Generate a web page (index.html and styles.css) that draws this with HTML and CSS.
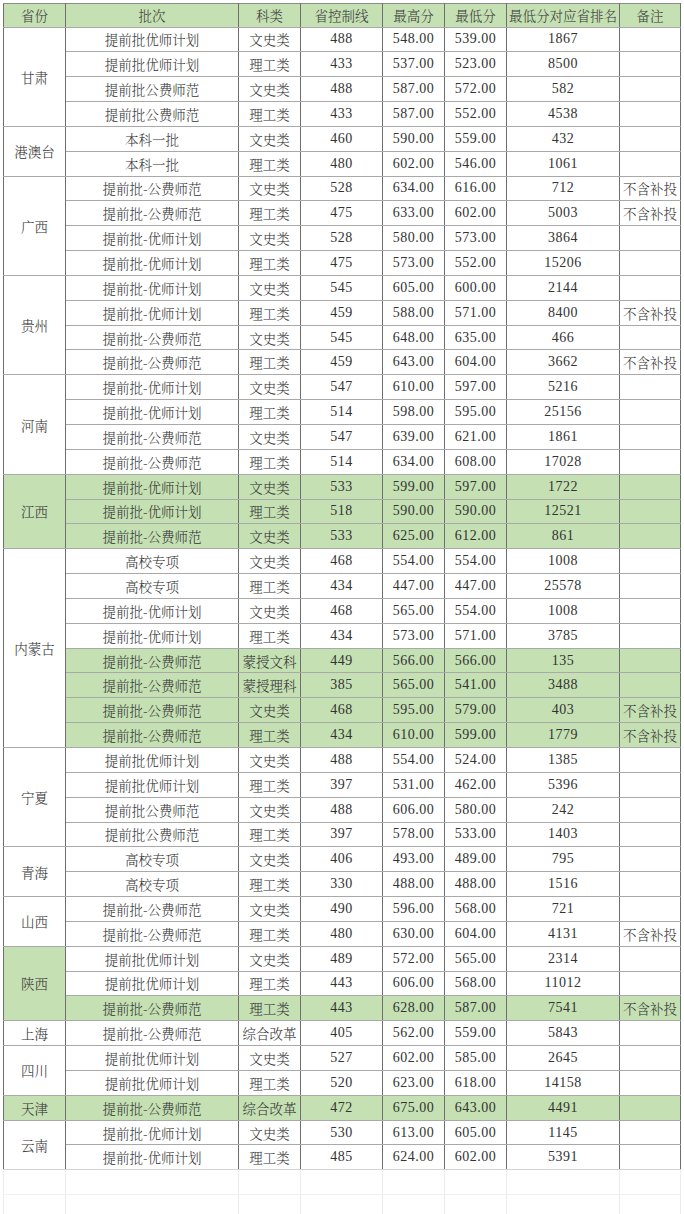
FILE: index.html
```html
<!DOCTYPE html>
<html lang="zh-CN">
<head>
<meta charset="utf-8">
<title>录取分数</title>
<link rel="stylesheet" href="styles.css">
</head>
<body>
<table class="score">
<colgroup>
<col class="c-prov"><col class="c-batch"><col class="c-type"><col class="c-line"><col class="c-max"><col class="c-min"><col class="c-rank"><col class="c-note">
</colgroup>
<thead>
<tr class="g"><th>省份</th><th>批次</th><th>科类</th><th>省控制线</th><th>最高分</th><th>最低分</th><th>最低分对应省排名</th><th>备注</th></tr>
</thead>
<tbody>
<tr><td rowspan="4" class="prov">甘肃</td><td>提前批优师计划</td><td>文史类</td><td class="n">488</td><td class="n">548.00</td><td class="n">539.00</td><td class="n">1867</td><td></td></tr>
<tr><td>提前批优师计划</td><td>理工类</td><td class="n">433</td><td class="n">537.00</td><td class="n">523.00</td><td class="n">8500</td><td></td></tr>
<tr><td>提前批公费师范</td><td>文史类</td><td class="n">488</td><td class="n">587.00</td><td class="n">572.00</td><td class="n">582</td><td></td></tr>
<tr><td>提前批公费师范</td><td>理工类</td><td class="n">433</td><td class="n">587.00</td><td class="n">552.00</td><td class="n">4538</td><td></td></tr>

<tr><td rowspan="2" class="prov">港澳台</td><td>本科一批</td><td>文史类</td><td class="n">460</td><td class="n">590.00</td><td class="n">559.00</td><td class="n">432</td><td></td></tr>
<tr><td>本科一批</td><td>理工类</td><td class="n">480</td><td class="n">602.00</td><td class="n">546.00</td><td class="n">1061</td><td></td></tr>

<tr><td rowspan="4" class="prov">广西</td><td>提前批-公费师范</td><td>文史类</td><td class="n">528</td><td class="n">634.00</td><td class="n">616.00</td><td class="n">712</td><td>不含补投</td></tr>
<tr><td>提前批-公费师范</td><td>理工类</td><td class="n">475</td><td class="n">633.00</td><td class="n">602.00</td><td class="n">5003</td><td>不含补投</td></tr>
<tr><td>提前批-优师计划</td><td>文史类</td><td class="n">528</td><td class="n">580.00</td><td class="n">573.00</td><td class="n">3864</td><td></td></tr>
<tr><td>提前批-优师计划</td><td>理工类</td><td class="n">475</td><td class="n">573.00</td><td class="n">552.00</td><td class="n">15206</td><td></td></tr>

<tr><td rowspan="4" class="prov">贵州</td><td>提前批-优师计划</td><td>文史类</td><td class="n">545</td><td class="n">605.00</td><td class="n">600.00</td><td class="n">2144</td><td></td></tr>
<tr><td>提前批-优师计划</td><td>理工类</td><td class="n">459</td><td class="n">588.00</td><td class="n">571.00</td><td class="n">8400</td><td>不含补投</td></tr>
<tr><td>提前批-公费师范</td><td>文史类</td><td class="n">545</td><td class="n">648.00</td><td class="n">635.00</td><td class="n">466</td><td></td></tr>
<tr><td>提前批-公费师范</td><td>理工类</td><td class="n">459</td><td class="n">643.00</td><td class="n">604.00</td><td class="n">3662</td><td>不含补投</td></tr>

<tr><td rowspan="4" class="prov">河南</td><td>提前批-优师计划</td><td>文史类</td><td class="n">547</td><td class="n">610.00</td><td class="n">597.00</td><td class="n">5216</td><td></td></tr>
<tr><td>提前批-优师计划</td><td>理工类</td><td class="n">514</td><td class="n">598.00</td><td class="n">595.00</td><td class="n">25156</td><td></td></tr>
<tr><td>提前批-公费师范</td><td>文史类</td><td class="n">547</td><td class="n">639.00</td><td class="n">621.00</td><td class="n">1861</td><td></td></tr>
<tr><td>提前批-公费师范</td><td>理工类</td><td class="n">514</td><td class="n">634.00</td><td class="n">608.00</td><td class="n">17028</td><td></td></tr>

<tr class="g"><td rowspan="3" class="prov">江西</td><td>提前批-优师计划</td><td>文史类</td><td class="n">533</td><td class="n">599.00</td><td class="n">597.00</td><td class="n">1722</td><td></td></tr>
<tr class="g"><td>提前批-优师计划</td><td>理工类</td><td class="n">518</td><td class="n">590.00</td><td class="n">590.00</td><td class="n">12521</td><td></td></tr>
<tr class="g"><td>提前批-公费师范</td><td>文史类</td><td class="n">533</td><td class="n">625.00</td><td class="n">612.00</td><td class="n">861</td><td></td></tr>

<tr><td rowspan="8" class="prov">内蒙古</td><td>高校专项</td><td>文史类</td><td class="n">468</td><td class="n">554.00</td><td class="n">554.00</td><td class="n">1008</td><td></td></tr>
<tr><td>高校专项</td><td>理工类</td><td class="n">434</td><td class="n">447.00</td><td class="n">447.00</td><td class="n">25578</td><td></td></tr>
<tr><td>提前批-优师计划</td><td>文史类</td><td class="n">468</td><td class="n">565.00</td><td class="n">554.00</td><td class="n">1008</td><td></td></tr>
<tr><td>提前批-优师计划</td><td>理工类</td><td class="n">434</td><td class="n">573.00</td><td class="n">571.00</td><td class="n">3785</td><td></td></tr>
<tr class="g"><td>提前批-公费师范</td><td>蒙授文科</td><td class="n">449</td><td class="n">566.00</td><td class="n">566.00</td><td class="n">135</td><td></td></tr>
<tr class="g"><td>提前批-公费师范</td><td>蒙授理科</td><td class="n">385</td><td class="n">565.00</td><td class="n">541.00</td><td class="n">3488</td><td></td></tr>
<tr class="g"><td>提前批-公费师范</td><td>文史类</td><td class="n">468</td><td class="n">595.00</td><td class="n">579.00</td><td class="n">403</td><td>不含补投</td></tr>
<tr class="g"><td>提前批-公费师范</td><td>理工类</td><td class="n">434</td><td class="n">610.00</td><td class="n">599.00</td><td class="n">1779</td><td>不含补投</td></tr>

<tr><td rowspan="4" class="prov">宁夏</td><td>提前批优师计划</td><td>文史类</td><td class="n">488</td><td class="n">554.00</td><td class="n">524.00</td><td class="n">1385</td><td></td></tr>
<tr><td>提前批优师计划</td><td>理工类</td><td class="n">397</td><td class="n">531.00</td><td class="n">462.00</td><td class="n">5396</td><td></td></tr>
<tr><td>提前批公费师范</td><td>文史类</td><td class="n">488</td><td class="n">606.00</td><td class="n">580.00</td><td class="n">242</td><td></td></tr>
<tr><td>提前批公费师范</td><td>理工类</td><td class="n">397</td><td class="n">578.00</td><td class="n">533.00</td><td class="n">1403</td><td></td></tr>

<tr><td rowspan="2" class="prov">青海</td><td>高校专项</td><td>文史类</td><td class="n">406</td><td class="n">493.00</td><td class="n">489.00</td><td class="n">795</td><td></td></tr>
<tr><td>高校专项</td><td>理工类</td><td class="n">330</td><td class="n">488.00</td><td class="n">488.00</td><td class="n">1516</td><td></td></tr>

<tr><td rowspan="2" class="prov">山西</td><td>提前批-公费师范</td><td>文史类</td><td class="n">490</td><td class="n">596.00</td><td class="n">568.00</td><td class="n">721</td><td></td></tr>
<tr><td>提前批-公费师范</td><td>理工类</td><td class="n">480</td><td class="n">630.00</td><td class="n">604.00</td><td class="n">4131</td><td>不含补投</td></tr>

<tr><td rowspan="3" class="prov gc">陕西</td><td>提前批优师计划</td><td>文史类</td><td class="n">489</td><td class="n">572.00</td><td class="n">565.00</td><td class="n">2314</td><td></td></tr>
<tr><td>提前批优师计划</td><td>理工类</td><td class="n">443</td><td class="n">606.00</td><td class="n">568.00</td><td class="n">11012</td><td></td></tr>
<tr class="g"><td>提前批-公费师范</td><td>理工类</td><td class="n">443</td><td class="n">628.00</td><td class="n">587.00</td><td class="n">7541</td><td>不含补投</td></tr>

<tr><td class="prov">上海</td><td>提前批-公费师范</td><td>综合改革</td><td class="n">405</td><td class="n">562.00</td><td class="n">559.00</td><td class="n">5843</td><td></td></tr>

<tr><td rowspan="2" class="prov">四川</td><td>提前批优师计划</td><td>文史类</td><td class="n">527</td><td class="n">602.00</td><td class="n">585.00</td><td class="n">2645</td><td></td></tr>
<tr><td>提前批优师计划</td><td>理工类</td><td class="n">520</td><td class="n">623.00</td><td class="n">618.00</td><td class="n">14158</td><td></td></tr>

<tr class="g"><td class="prov">天津</td><td>提前批-公费师范</td><td>综合改革</td><td class="n">472</td><td class="n">675.00</td><td class="n">643.00</td><td class="n">4491</td><td></td></tr>

<tr><td rowspan="2" class="prov last">云南</td><td>提前批-优师计划</td><td>文史类</td><td class="n">530</td><td class="n">613.00</td><td class="n">605.00</td><td class="n">1145</td><td></td></tr>
<tr class="end"><td>提前批-优师计划</td><td>理工类</td><td class="n">485</td><td class="n">624.00</td><td class="n">602.00</td><td class="n">5391</td><td></td></tr>

<tr class="fade"><td></td><td></td><td></td><td></td><td></td><td></td><td></td><td></td></tr>
<tr class="fade"><td></td><td></td><td></td><td></td><td></td><td></td><td></td><td></td></tr>
</tbody>
</table>
</body>
</html>
```
FILE: styles.css
```css
html, body {
  margin: 0;
  padding: 0;
  background: #ffffff;
}

body {
  padding: 3px 0 0 3px;
  font-family: "Noto Serif CJK SC", "Liberation Serif", "Noto Sans CJK SC", serif;
  color: #333333;
  overflow: hidden;
}

.score {
  border-collapse: collapse;
  table-layout: fixed;
  width: 677px;
  font-size: 13.5px;
}

.c-prov { width: 62px; }
.c-batch { width: 173px; }
.c-type { width: 62px; }
.c-line { width: 82px; }
.c-max { width: 62px; }
.c-min { width: 62px; }
.c-rank { width: 113px; }
.c-note { width: 61px; }

.score th,
.score td {
  height: 23.85px;
  padding: 0;
  text-align: center;
  vertical-align: middle;
  white-space: nowrap;
  overflow: hidden;
  font-weight: 300;
  line-height: 16px;
  border-top: 1px solid #a9a9a9;
  border-bottom: 1px solid #a9a9a9;
  border-left: 1px solid #6f6f6f;
  border-right: 1px solid #6f6f6f;
}

.score thead th {
  height: 22.5px;
  color: #3a3a3a;
  border-top-color: #8a8a8a;
}

.score td.n {
  font-family: "Liberation Serif", serif;
  font-size: 14px;
  font-weight: normal;
  letter-spacing: 0.5px;
}

.score .prov {
  background: #ffffff;
}

.g th,
.g td,
.score .g .prov,
.score td.gc {
  background: #c5e0b3;
}

.end td,
.score td.last {
  border-bottom-color: #d4d4d4;
}

.fade td {
  height: 23.5px;
  border-top-color: #ededed;
  border-bottom-color: #f0f0f0;
  border-left-color: #ececec;
  border-right-color: #ececec;
  background: #ffffff;
}
```
